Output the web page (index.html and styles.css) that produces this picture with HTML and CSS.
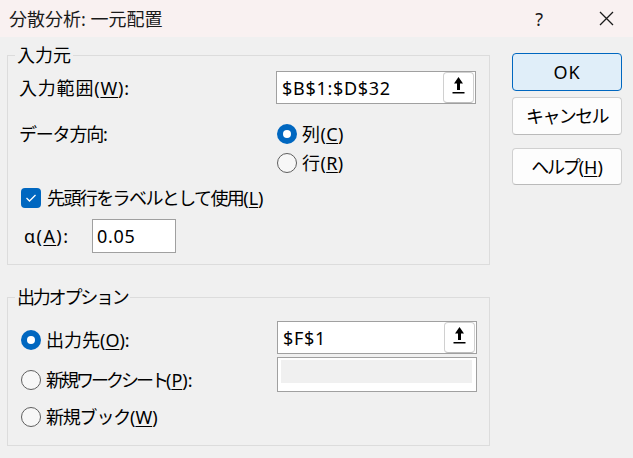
FILE: index.html
```html
<!DOCTYPE html>
<html lang="ja">
<head>
    <meta charset="UTF-8">
    <title>分散分析: 一元配置</title>
    <link rel="stylesheet" href="styles.css">
</head>
<body>
    <div class="titlebar">
        <span class="title">分散分析: 一元配置</span>
        <span class="cap-help">?</span>
        <svg class="cap-close" width="15" height="15" viewBox="0 0 15 15">
            <path d="M1 1 L14 14 M14 1 L1 14" stroke="#1a1a1a" stroke-width="1.3" fill="none"/>
        </svg>
    </div>

    <div class="main">
        <div class="groups">
            <!-- input source -->
            <fieldset class="group">
                <legend>入力元</legend>
                <div class="group-body">
                    <div class="row r-range">
                        <span class="label-col latin-wide">入力範囲(<u>W</u>):</span>
                        <div class="refedit">
                            <span class="refedit-text">$B$1:$D$32</span>
                            <span class="refedit-btn">
                                <svg width="13" height="17" viewBox="0 0 13 17">
                                    <path d="M6.5 0 L11 6.5 L8 6.5 L8 13 L5 13 L5 6.5 L2 6.5 Z" fill="#000"/>
                                    <rect x="0.5" y="15" width="12" height="1.5" fill="#000"/>
                                </svg>
                            </span>
                        </div>
                    </div>
                    <div class="row r-dir">
                        <span class="label-col"><span class="squeeze-s">データ方向</span>:</span>
                        <span class="option"><span class="radio on"></span>列(<u>C</u>)</span>
                    </div>
                    <div class="row r-dir2">
                        <span class="label-col"></span>
                        <span class="option"><span class="radio"></span>行(<u>R</u>)</span>
                    </div>
                    <div class="row r-check">
                        <span class="check">
                            <svg width="12" height="10" viewBox="0 0 12 10">
                                <path d="M1.5 5 L4.5 8 L10.5 2" stroke="#fff" stroke-width="1.3" fill="none"/>
                            </svg>
                        </span>
                        <span><span class="squeeze-m">先頭行をラベルとして使用</span>(<u>L</u>)</span>
                    </div>
                    <div class="row r-alpha">
                        <span class="alpha-label">α(<u>A</u>):</span>
                        <div class="alpha-input">0.05</div>
                    </div>
                </div>
            </fieldset>

            <!-- output options -->
            <fieldset class="group group-out">
                <legend class="squeeze-l">出力オプション</legend>
                <div class="out-body">
                    <div class="out-radios">
                        <div class="out-row o1"><span class="radio on"></span>出力先(<u>O</u>):</div>
                        <div class="out-row o2"><span class="radio"></span><span class="squeeze-xl">新規ワークシート</span>(<u>P</u>):</div>
                        <div class="out-row o3"><span class="radio"></span><span class="squeeze-s">新規ブック</span>(<u>W</u>)</div>
                    </div>
                    <div class="out-fields">
                        <div class="refedit">
                            <span class="refedit-text">$F$1</span>
                            <span class="refedit-btn">
                                <svg width="13" height="17" viewBox="0 0 13 17">
                                    <path d="M6.5 0 L11 6.5 L8 6.5 L8 13 L5 13 L5 6.5 L2 6.5 Z" fill="#000"/>
                                    <rect x="0.5" y="15" width="12" height="1.5" fill="#000"/>
                                </svg>
                            </span>
                        </div>
                        <div class="field-disabled"><div class="disabled-fill"></div></div>
                    </div>
                </div>
            </fieldset>
        </div>

        <div class="buttons">
            <div class="btn btn-ok">OK</div>
            <div class="btn btn-cancel"><span class="squeeze-m">キャンセル</span></div>
            <div class="btn btn-help"><span class="squeeze-l">ヘルプ</span>(<u>H</u>)</div>
        </div>
    </div>
</body>
</html>
```

FILE: styles.css
```css
* {
    box-sizing: border-box;
}
body {
    margin: 0;
    width: 633px;
    height: 458px;
    overflow: hidden;
    background-color: #f0f0f0;
    font-family: "Noto Sans", "Noto Sans CJK JP", sans-serif;
    font-size: 18px;
    line-height: 20px;
    color: #000;
}
u {
    text-underline-offset: 2px;
}

.squeeze-s {
    letter-spacing: -1.2px;
}
.squeeze-m {
    letter-spacing: -1.6px;
}
.squeeze-l {
    letter-spacing: -2.2px;
}
.squeeze-xl {
    letter-spacing: -3px;
}
.latin-wide {
    letter-spacing: 0.8px;
}

/* title bar */
.titlebar {
    height: 37px;
    background-color: #f9f1f1;
    display: flex;
    align-items: center;
    padding-left: 9px;
}
.title {
    flex: 1;
    color: #1a1a1a;
}
.cap-help {
    margin-right: 56px;
    color: #1a1a1a;
}
.cap-close {
    margin-right: 19px;
}

.main {
    display: flex;
    align-items: flex-start;
}
.groups {
    margin: 8px 0 0 7px;
}

/* group boxes */
.group {
    margin: 0;
    padding: 0;
    width: 483px;
    min-width: 0;
    border: 1px solid #dcdcdc;
}
.group legend {
    margin-left: 7px;
    padding: 0 2px;
    height: 20px;
    line-height: 20px;
}
.group-body {
    padding: 6px 0 11px 11px;
}
.row {
    display: flex;
    align-items: center;
}
.label-col {
    width: 257px;
    flex-shrink: 0;
}
.r-range {
    height: 33px;
}
.r-dir {
    margin-top: 15px;
    height: 30px;
}
.r-dir2 {
    height: 28px;
}
.r-dir .option,
.r-dir2 .option {
    padding-left: 1px;
    letter-spacing: 0.4px;
}
.option {
    display: flex;
    align-items: center;
}
.r-check {
    margin-top: 6px;
    height: 30px;
    padding-left: 2px;
}
.r-alpha {
    margin-top: 6px;
    height: 34px;
}
.alpha-label {
    width: 73px;
    padding-left: 5px;
    letter-spacing: 1.4px;
}
.alpha-input {
    width: 84px;
    height: 34px;
    border: 1px solid #a0a0a0;
    background-color: #fff;
    padding-left: 4px;
    letter-spacing: 0.7px;
    display: flex;
    align-items: center;
}

/* reference edit box */
.refedit {
    width: 200px;
    height: 33px;
    border: 1px solid #a0a0a0;
    background-color: #fff;
    display: flex;
    align-items: center;
    padding-left: 5px;
}
.refedit-text {
    flex: 1;
    letter-spacing: 0.7px;
}
.refedit-btn {
    width: 31px;
    height: 31px;
    margin-right: 1px;
    padding-bottom: 4px;
    border: 1px solid #d0d0d0;
    border-bottom-color: #bdbdbd;
    border-radius: 4px;
    background-color: #fff;
    display: flex;
    align-items: center;
    justify-content: center;
}

/* radios and checkbox */
.radio {
    width: 20px;
    height: 20px;
    margin-right: 5px;
    flex-shrink: 0;
    border-radius: 50%;
    border: 1px solid #5f5f5f;
    background-color: #f7f7f7;
}
.radio.on {
    border: none;
    background-color: #0067c0;
    display: flex;
    align-items: center;
    justify-content: center;
}
.radio.on:after {
    content: '';
    width: 8px;
    height: 8px;
    border-radius: 50%;
    background-color: #fff;
}
.check {
    width: 20px;
    height: 20px;
    margin-right: 6px;
    border-radius: 4px;
    background-color: #0067c0;
    display: flex;
    align-items: center;
    justify-content: center;
}

/* output group */
.group-out {
    margin-top: 22px;
}
.out-body {
    display: flex;
    padding: 0 0 11px 13px;
}
.out-radios {
    width: 256px;
    padding-top: 15px;
}
.out-row {
    display: flex;
    align-items: center;
}
.o1 {
    height: 36px;
}
.o2 {
    margin-top: 2px;
    height: 40px;
}
.o3 {
    height: 34px;
}
.out-fields {
    padding-top: 14px;
}
.field-disabled {
    margin-top: 3px;
    width: 200px;
    height: 35px;
    border: 1px solid #a0a0a0;
    background-color: #fff;
    padding: 2px 4px 0 3px;
}
.disabled-fill {
    height: 23px;
    background-color: #f0f0f0;
}

/* dialog buttons */
.buttons {
    margin: 16px 0 0 22px;
}
.btn {
    width: 110px;
    height: 38px;
    border: 1px solid #d0d0d0;
    border-bottom-color: #bababa;
    border-radius: 4px;
    background-color: #fdfdfd;
    display: flex;
    align-items: center;
    justify-content: center;
}
.btn-ok {
    background-color: #e0eef9;
    border-color: #0067c0;
    letter-spacing: 1px;
}
.btn-cancel {
    margin-top: 6px;
}
.btn-help {
    margin-top: 13px;
    height: 37px;
}
```
